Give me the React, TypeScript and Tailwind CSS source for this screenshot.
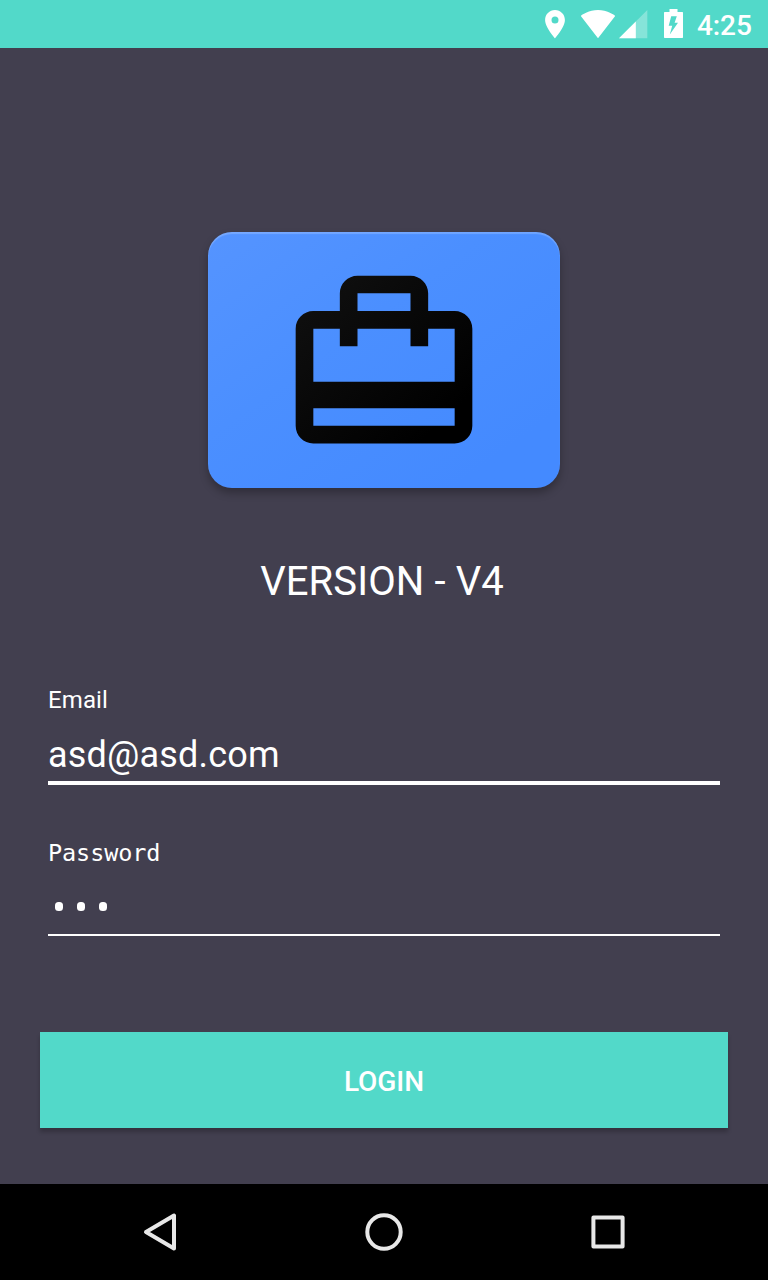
import React from "react";

function StatusBar() {
  return (
    <header className="flex h-12 shrink-0 items-start bg-[#52d9c9] pl-[545px] text-white">
      <svg className="mt-[10px] h-[29px] w-5 shrink-0" viewBox="0 0 20 29" fill="currentColor">
        <path
          fillRule="evenodd"
          d="M10 0C4.5 0 .1 4.4 .1 9.9 .1 17.3 10 28.3 10 28.3S19.9 17.3 19.9 9.9C19.9 4.4 15.5 0 10 0Zm0 13.4a3.5 3.5 0 1 1 0-7 3.5 3.5 0 0 1 0 7Z"
        />
      </svg>
      <svg className="mt-[10px] ml-4 h-[29px] w-[34px] shrink-0" viewBox="0 0 34 29" fill="currentColor">
        <path d="M17 28.2 34.3 5.9C33.6 5.4 27 0 17 0S.4 5.4-.3 5.9L17 28.2Z" />
      </svg>
      <svg className="mt-[10px] ml-1 h-[29px] w-[29px] shrink-0" viewBox="0 0 29 29" fill="currentColor">
        <path fillOpacity=".3" d="M0 28.3H28.3V0Z" />
        <path d="M0 28.3H16.8V11.5Z" />
      </svg>
      <svg className="mt-[9px] ml-4 h-[29px] w-[19px] shrink-0" viewBox="0 0 19 29" fill="currentColor">
        <path
          fillRule="evenodd"
          d="M0 3.5 .6 2.9H5.5V0h8v2.9H18.4L19 3.5V28.4L18.4 29H.6L0 28.4ZM7.2 7.3 4.7 16.8H8.2L5.8 25.5 14 13.7H10.6L12.8 7.3Z"
        />
      </svg>
      <time className="mt-[10px] ml-[14px] font-medium text-[28px] leading-8 tracking-[-0.1px]">4:25</time>
    </header>
  );
}

function Logo() {
  return (
    <div className="mt-[184px] flex h-64 w-[352px] shrink-0 items-center justify-center rounded-[24px] bg-linear-to-br from-[#5594ff] via-[#4b8fff] via-40% to-[#448aff] to-85% shadow-[0_5px_8px_rgba(0,0,0,0.28),inset_0_2px_1px_rgba(255,255,255,0.2)]">
      <svg className="mt-2 size-[212px]" viewBox="0 0 24 24">
        <defs>
          <linearGradient id="caseFill" x1="0" y1="0" x2="1" y2="1">
            <stop offset="0" stopColor="#111" />
            <stop offset=".85" stopColor="#000" />
          </linearGradient>
        </defs>
        <path
          fill="url(#caseFill)"
          d="M20 6h-3V4c0-1.11-.89-2-2-2H9c-1.11 0-2 .89-2 2v2H4c-1.11 0-2 .89-2 2v11c0 1.11.89 2 2 2h16c1.11 0 2-.89 2-2V8c0-1.11-.89-2-2-2zM9 4h6v2H9V4zm11 15H4v-2h16v2zm0-5H4V8h3v2h2V8h6v2h2V8h3v6z"
        />
      </svg>
    </div>
  );
}

function NavBar() {
  return (
    <nav className="flex h-24 shrink-0 items-center justify-between bg-black px-[136px] text-[#e8e8e8]">
      <svg className="size-12" viewBox="0 0 48 48" fill="none" stroke="currentColor" strokeWidth="4" strokeLinejoin="round">
        <path d="M38 7.5V40.5L10 24Z" />
      </svg>
      <svg className="size-12" viewBox="0 0 48 48" fill="none" stroke="currentColor" strokeWidth="4">
        <circle cx="24" cy="24" r="16.7" />
      </svg>
      <svg className="size-12" viewBox="0 0 48 48" fill="none" stroke="currentColor" strokeWidth="4" strokeLinejoin="round">
        <rect x="9.4" y="9.4" width="29.2" height="29.2" />
      </svg>
    </nav>
  );
}

export default function App() {
  return (
    <div className="flex h-[1280px] w-[768px] flex-col bg-[#423f4f] font-['Roboto',sans-serif] text-white">
      <StatusBar />
      <main className="flex flex-1 flex-col items-center">
        <Logo />
        <h1 className="mt-[70px] -ml-1 text-[40px] leading-[48px] tracking-[0.1px]">VERSION - V4</h1>
        <form className="mt-[78px] flex w-full flex-col px-10">
          <div className="mx-2 flex flex-col border-b-4 border-white pb-[2px]">
            <label className="text-2xl leading-8 tracking-[0.1px]">Email</label>
            <span className="mt-[15px] text-[36px] leading-[48px] tracking-[0.18px]">asd@asd.com</span>
          </div>
          <div className="mx-2 mt-[52px] flex flex-col border-b-2 border-white">
            <label className="font-['DejaVu_Sans_Mono',monospace] text-[23.5px] leading-8 tracking-[-0.1px]">Password</label>
            <div className="mt-[33px] flex gap-[14px] pb-[23px] pl-[7px]">
              <span className="h-[9px] w-2 rounded-[3.5px] bg-white" />
              <span className="h-[9px] w-2 rounded-[3.5px] bg-white" />
              <span className="h-[9px] w-2 rounded-[3.5px] bg-white" />
            </div>
          </div>
          <button type="button" className="mt-24 h-24 bg-[#52d9c9] pt-1 text-[28px] font-medium tracking-[-0.05px] shadow-[0_4px_4px_rgba(0,0,0,0.22)]">
            LOGIN
          </button>
        </form>
      </main>
      <NavBar />
    </div>
  );
}
